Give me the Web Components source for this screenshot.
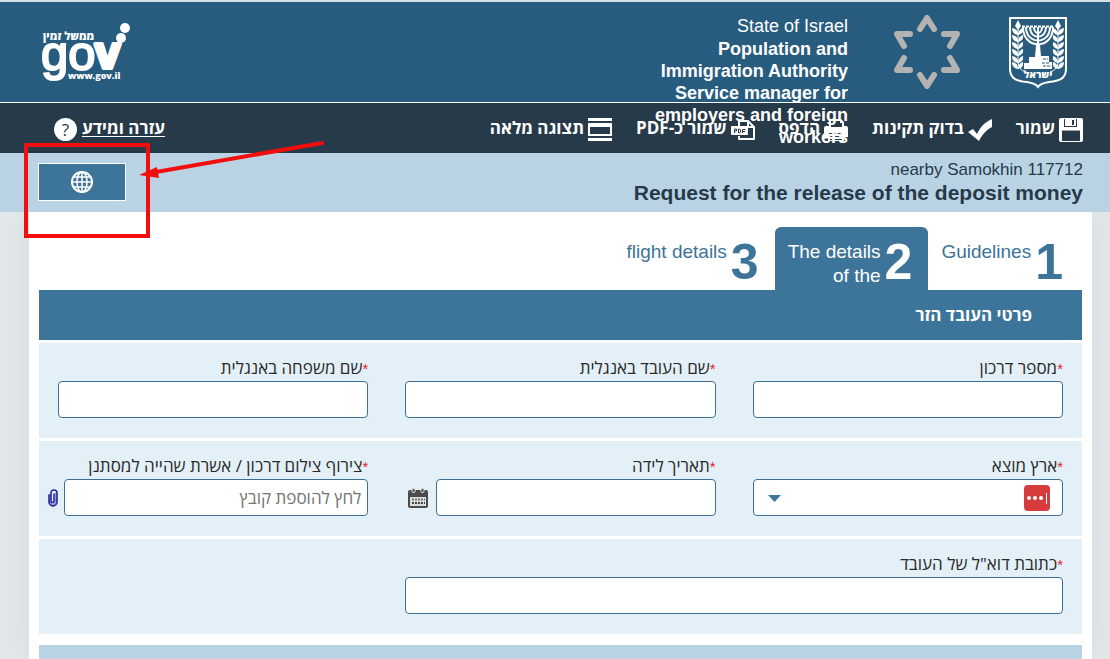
<!DOCTYPE html>
<html lang="he" dir="rtl">
<head>
<meta charset="utf-8">
<title>Request for the release of the deposit money</title>
<style>
  html, body { margin: 0; }
  body { font-family: "Open Sans", "Liberation Sans", Arial, sans-serif; font-size: 17px; background: #e2e7e9; }
</style>
</head>
<body>
<deposit-page></deposit-page>
<script>
const define = (name, html, setup) => {
  const t = document.createElement('template');
  t.innerHTML = html;
  customElements.define(name, class extends HTMLElement {
    connectedCallback() {
      if (this.shadowRoot) return;
      const root = this.attachShadow({ mode: 'open' });
      root.append(t.content.cloneNode(true));
      if (setup) setup(this, root);
    }
  });
};

/* Toolbar glyphs, 24px grid */
const icons = {
  save: '<path fill="#fff" d="M2 0h20a2 2 0 0 1 2 2v20a2 2 0 0 1-2 2H2a2 2 0 0 1-2-2V2a2 2 0 0 1 2-2z"/><path fill="#263a49" d="M5 1h13v8H5zM3 12h18v11H3z"/><path fill="#fff" d="M6 1h11v7H6z"/><path fill="#263a49" d="M13 2h2v5h-2z"/><path fill="#9aa5ad" d="M3 12h18v1H3z"/>',
  check: '<path fill="#fff" d="M0 14l5-3 4 5C12 9 17 4 24 1v8C18 12 14 17 11 23z"/>',
  print: '<path fill="#fff" d="M5 1h12l3 3v4h2a2 2 0 0 1 2 2v9h-4v4H4v-4H0v-9a2 2 0 0 1 2-2h3z"/><path fill="#263a49" d="M7 3h9v2h2v4H7zM5 15h14v1H5zM6 18h12v1H6zM6 21h12v1H6z"/>',
  pdf: '<path fill="none" stroke="#fff" stroke-width="2" stroke-linejoin="round" d="M8 8V3h9l6 6v12H8v-3M17 3v6h6"/><rect y="8" width="17" height="9" rx="1" fill="#fff"/><path fill="none" stroke="#263a49" d="M3.500 15v-4h2v2h-2M7.500 11v4h1l1-1v-2l-1-1zM14.500 11.500h-3V15M12 13.500h2"/>',
  full: '<path fill="#fff" d="M0 0h24v3H0zM0 20h24v3H0zM0 5h24v13H0z"/><path fill="#263a49" d="M2 9h20v7H2z"/>'
};

define('tool-button', `
<style>
  :host { display: block; flex: none; }
  button { all: unset; display: flex; align-items: center; gap: 4px; color: #fff; font-weight: 700; font-size: 17px; line-height: 24px; white-space: nowrap; cursor: pointer; }
  svg { display: block; flex: none; width: 24px; height: 24px; }
  span { padding-bottom: 4px; }
</style>
<button type="button"><svg viewBox="0 0 24 24" aria-hidden="true"></svg><span><slot></slot></span></button>`,
(el, root) => { root.querySelector('svg').innerHTML = icons[el.getAttribute('icon')]; });

define('gov-logo', `
<style>:host { display: block; } svg { display: block; }
text { fill: #fff; direction: ltr; }</style>
<svg width="92" height="64" viewBox="0 0 92 64">
  <text x="3" y="18" font-family="Open Sans" font-weight="800" font-size="11">ממשל זמין</text>
  <text x="1" y="48" font-family="Liberation Sans" font-size="49" stroke="#fff" stroke-width="2">go</text>
  <text x="55" y="46" font-family="Liberation Sans" font-weight="700" font-size="45" stroke="#fff" stroke-width="4" stroke-linejoin="round">v</text>
  <text x="28" y="57" font-family="Open Sans" font-weight="800" font-size="9">www.gov.il</text>
  <circle cx="81" cy="16" r="5" fill="#fff"/><circle cx="85" cy="6" r="5" fill="#fff"/>
</svg>`);

define('star-logo', `
<style>:host { display: block; } svg { display: block; }</style>
<svg width="66" height="74" viewBox="-33 -37 66 74" fill="none" stroke="#b3b3b3" stroke-width="6" stroke-linecap="round" stroke-linejoin="round">
  <path d="M-7-23L0-34L7-23M-7 23L0 34L7 23M17-18H30L23-6M17 18H30L23 6M-17-18H-30L-23-6M-17 18H-30L-23 6"/>
</svg>`);

define('state-emblem', `
<style>:host { display: block; } svg { display: block; }</style>
<svg width="58" height="72" viewBox="0 0 58 72" fill="none" stroke="#fff">
  <path stroke-width="2" d="M1 1H57V52C57 62 50 64 40 65C34 66 31 67 29 70C27 67 24 66 18 65C8 64 1 62 1 52Z"/>
  <g stroke-width="2"><path d="M29 10V38M25 10C25 18 33 18 33 10M21 10C21 23 37 23 37 10M17 10C17 28 41 28 41 10M14 10C14 33 44 33 44 10"/><path stroke-dasharray="3 1" d="M13 9.500H45"/></g>
  <path fill="#fff" stroke="none" d="M27 28h4l1 11h8v6h3v7H15v-6h5v-6h6z"/>
  <path stroke="#275c7f" d="M34 42h5M33 46h8M34 49h7" stroke-dasharray="3 1"/>
  <g id="b"><path d="M9 7V44Q9 53 17 55"/>
  <g fill="#fff" stroke="none"><path d="M9 3l3 6-3 4-3-4z"/>
  <path id="l" d="M9 18Q3 17 3 11Q9 12 9 17Q10 12 14 11Q15 17 9 18z"/>
  <use href="#l" y="7"/><use href="#l" y="14"/><use href="#l" y="21"/><use href="#l" y="28"/><use href="#l" y="34"/></g></g>
  <use href="#b" transform="matrix(-1 0 0 1 58 0)"/>
  <text x="29" y="61" text-anchor="middle" fill="#fff" stroke="none" font-family="Open Sans" font-weight="800" font-size="10">ישראל</text>
</svg>`);

define('site-header', `
<style>
  :host { display: block; background: #275c7f; border-top: 2px solid #cfe0ea; border-bottom: 1px solid #fff; color: #fff; }
  header { display: flex; align-items: flex-start; height: 100px; padding: 0 43px 0 40px; }
  state-emblem { margin-top: 15px; }
  star-logo { margin-top: 13px; margin-inline-start: 49px; }
  .agency { position: relative; z-index: 2; width: 200px; margin-top: 13px; margin-inline-start: 46px; font-family: "Liberation Sans", Arial, sans-serif; font-size: 18px; line-height: 22px; text-align: right; }
  p, h1 { margin: 0; font: inherit; }
  h1 { font-weight: 700; padding-top: 1px; }
  gov-logo { margin-top: 20px; margin-inline-start: auto; }
</style>
<header>
  <state-emblem></state-emblem>
  <star-logo></star-logo>
  <div class="agency"><p>State of Israel</p><h1>Population and Immigration Authority<br>Service manager for employers and foreign workers</h1></div>
  <gov-logo></gov-logo>
</header>`);

define('tool-bar', `
<style>
  :host { display: block; background: #263a49; }
  nav { display: flex; align-items: center; gap: 24px; height: 50px; padding: 3px 27px 0 54px; box-sizing: border-box; }
  a { display: flex; align-items: center; gap: 5px; margin-inline-start: auto; color: #fff; font-weight: 700; line-height: 24px; text-decoration: none; white-space: nowrap; }
  u { padding-bottom: 4px; text-underline-offset: 2px; }
  .q { width: 23px; height: 23px; border-radius: 50%; background: #fff; color: #263a49; font: 17px/24px "Open Sans", sans-serif; text-align: center; }
</style>
<nav>
  <tool-button icon="save">שמור</tool-button>
  <tool-button icon="check">בדוק תקינות</tool-button>
  <tool-button icon="print">הדפס</tool-button>
  <tool-button icon="pdf">שמור כ-PDF</tool-button>
  <tool-button icon="full">תצוגה מלאה</tool-button>
  <a href="#help"><u>עזרה ומידע</u><span class="q">?</span></a>
</nav>`);

define('title-band', `
<style>
  :host { display: block; background: #b9d3e4; color: #263a49; font-family: "Liberation Sans", Arial, sans-serif; }
  section { display: flex; justify-content: space-between; align-items: flex-start; height: 59px; padding: 0 27px 0 38px; }
  .t { padding-top: 6px; text-align: right; }
  p { margin: 0; font-size: 17px; line-height: 22px; }
  h2 { margin: 0; font-size: 21px; line-height: 24px; }
  button { display: flex; align-items: center; justify-content: center; width: 88px; height: 38px; margin-top: 10px; padding: 0; background: #3d7499; border: 1px solid #fff; cursor: pointer; }
</style>
<section>
  <div class="t"><p>nearby Samokhin 117712</p><h2>Request for the release of the deposit money</h2></div>
  <button type="button" aria-label="Language">
    <svg width="24" height="24" viewBox="-12 -12 24 24" fill="none" stroke="#fff" stroke-width="1.500"><circle r="10" stroke-width="2"/><ellipse rx="5" ry="10"/><path d="M0-11V11M-11 0H11M-9-5H9M-9 5H9"/></svg>
  </button>
</section>`);

define('step-tab', `
<style>
  :host { display: block; flex: none; color: #3d7499; border-radius: 6px 6px 0 0; font-family: "Liberation Sans", Arial, sans-serif; }
  :host([current]) { background: #3d7499; color: #fff; }
  a { display: flex; gap: 4px; height: 63px; box-sizing: border-box; padding: 13px 16px 0 13px; color: inherit; text-decoration: none; text-align: right; }
  b { font-size: 50px; line-height: 44px; }
  span { font-size: 19px; line-height: 24px; white-space: nowrap; }
</style>
<a href="#"><b></b><span><slot></slot></span></a>`,
(el, root) => {
  const n = el.getAttribute('number');
  root.querySelector('b').textContent = n;
  root.querySelector('a').href = '#step-' + n;
});

define('form-field', `
<style>
  :host { display: block; min-width: 0; }
  :host([wide]) { grid-column: span 2; }
  label { display: block; margin-bottom: 2px; font-size: 17px; line-height: 22px; color: #2b2b2b; white-space: nowrap; }
  label i { color: #f01818; font: 15px/15px "Liberation Sans", Arial, sans-serif; }
  .box { display: flex; align-items: center; position: relative; }
  input, select { flex: 1; min-width: 0; height: 37px; box-sizing: border-box; margin: 0; padding: 0 6px; background: #fff; border: 1px solid #3d6f95; border-radius: 4px; font: 17px "Open Sans", sans-serif; color: #2b2b2b; appearance: none; }
  input::placeholder { color: #757575; opacity: 1; }
  svg { flex: none; display: block; }
  .file { margin-inline-end: -10px; }
  .arrow { position: absolute; left: 15px; top: 16px; pointer-events: none; }
  .badge { position: absolute; right: 13px; top: 6px; }
  .cal { margin: 0 8px 0 3px; }
  .clip { margin-right: 6px; }
</style>
<label for="f"><i>*</i><span></span></label><div class="box"></div>`,
(el, root) => {
  root.querySelector('span').textContent = el.getAttribute('label');
  const box = root.querySelector('.box');
  const kind = el.getAttribute('kind');
  if (kind === 'select') {
    box.innerHTML = `<select id="f"><option></option></select>
      <svg class="arrow" width="13" height="7"><path fill="#3d7499" d="M0 0H13L6.500 7z"/></svg>
      <svg class="badge" width="26" height="26"><rect width="26" height="26" rx="4" fill="#d63c3c"/><g fill="#fff"><circle cx="5" cy="13" r="2"/><circle cx="11" cy="13" r="2"/><circle cx="17" cy="13" r="2"/><path d="M22 8h1v11h-1z"/></g></svg>`;
  } else if (kind === 'date') {
    box.innerHTML = `<input id="f" type="text"><svg class="cal" width="20" height="20"><rect y="2" width="20" height="18" rx="2" fill="#4b4b4b"/><path fill="#ddd" d="M2 9h16v9H2z"/><path stroke="#777" stroke-width="2" stroke-dasharray="2 1" d="M4 11.500h13"/><path stroke="#444" stroke-width="2" stroke-dasharray="2 1" d="M4 15h13"/><g fill="#555" stroke="#ddd"><rect x="4" y="0.500" width="3" height="4" rx="1"/><rect x="13" y="0.500" width="3" height="4" rx="1"/></g></svg>`;
  } else if (kind === 'file') {
    box.classList.add('file');
    box.innerHTML = `<input id="f" type="text" readonly><svg class="clip" width="10" height="18" fill="none"><path stroke="#8f90d8" stroke-width="3" d="M2 5v8a3 3 0 0 0 6 0V4"/><path stroke="#24289a" stroke-width="1.500" stroke-linecap="round" d="M1 6v7a4 4 0 0 0 8 0V4a3 3 0 0 0-6 0v8a1.500 1.500 0 0 0 3 0V5"/></svg>`;
    root.querySelector('input').placeholder = el.getAttribute('placeholder');
  } else box.innerHTML = '<input id="f" type="text">';
});

define('field-row', `
<style>
  :host { display: grid; grid-template-columns: repeat(3, 1fr); column-gap: 37px; padding: 14px 19px 20px; background: #e3f0f8; }
</style><slot></slot>`);

define('red-marker', `
<style>:host { position: absolute; left: 22px; top: 138px; z-index: 5; pointer-events: none; } svg { display: block; }</style>
<svg width="306" height="104" fill="none" stroke="#f40d0d" stroke-width="4" aria-hidden="true">
  <rect x="4" y="7" width="122" height="91"/>
  <path stroke-linecap="round" d="M300 5L134 34"/><path fill="#f40d0d" stroke="none" d="M117 37L135 29L137 40z"/>
</svg>`);

define('deposit-page', `
<style>
  :host { display: flex; flex-direction: column; position: relative; min-height: 100vh; }
  main { flex: 1; display: flex; flex-direction: column; margin: 0 18px 0 29px; padding: 15px 10px 0; background: #fff; box-shadow: 0 0 30px rgba(40,60,60,.06); clip-path: inset(0 -30px); }
  .tabs { display: flex; align-items: flex-end; padding-right: 3px; }
  h3 { margin: 0; padding: 0 50px; background: #3d7499; color: #fff; font-size: 17px; line-height: 50px; }
  .rows { display: grid; gap: 3px; padding: 3px 0 11px; }
  .next { flex: 1; min-height: 14px; background: #b9d3e4; }
</style>
<site-header></site-header>
<tool-bar></tool-bar>
<title-band></title-band>
<main>
  <nav class="tabs">
    <step-tab number="1">Guidelines</step-tab>
    <step-tab number="2" current>The details<br>of the</step-tab>
    <step-tab number="3">flight details</step-tab>
  </nav>
  <h3>פרטי העובד הזר</h3>
  <div class="rows">
    <field-row>
      <form-field label="מספר דרכון"></form-field>
      <form-field label="שם העובד באנגלית"></form-field>
      <form-field label="שם משפחה באנגלית"></form-field>
    </field-row>
    <field-row>
      <form-field kind="select" label="ארץ מוצא"></form-field>
      <form-field kind="date" label="תאריך לידה"></form-field>
      <form-field kind="file" label="צירוף צילום דרכון / אשרת שהייה למסתנן" placeholder="לחץ להוספת קובץ"></form-field>
    </field-row>
    <field-row>
      <form-field wide label='כתובת דוא"ל של העובד'></form-field>
    </field-row>
  </div>
  <div class="next"></div>
</main>
<red-marker></red-marker>`);
</script>
</body>
</html>
